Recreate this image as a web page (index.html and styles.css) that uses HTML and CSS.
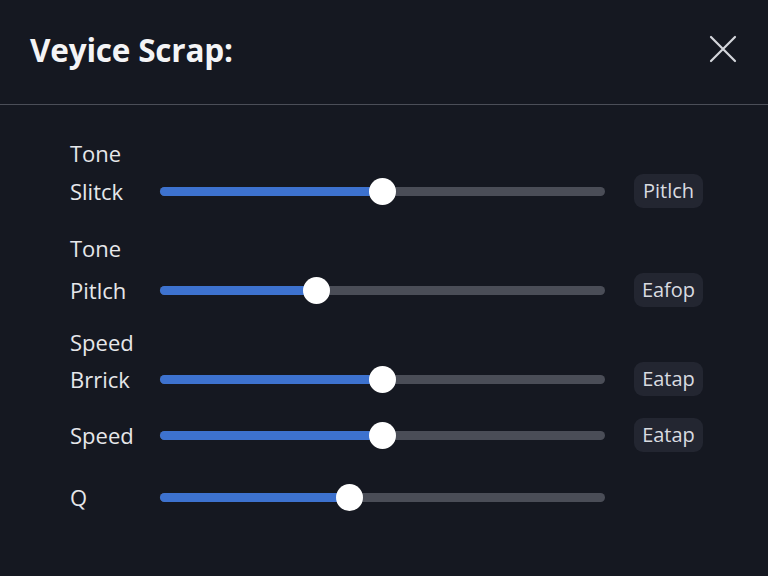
FILE: index.html
```html
<!DOCTYPE html>
<html>
<head>
<meta charset="utf-8">
<link rel="stylesheet" href="styles.css">
</head>
<body>
<div class="panel">
  <header class="header">
    <h1 class="title">Veyice Scrap:</h1>
    <button class="close" aria-label="Close">
      <svg width="30" height="30" viewBox="0 0 30 30"><path d="M3 3 L27 27 M27 3 L3 27" stroke="#d4d6dc" stroke-width="2.2" stroke-linecap="round" fill="none"/></svg>
    </button>
  </header>
  <div class="content">
    <div class="caption c1">Tone</div>
    <div class="row r1">
      <span class="label">Slitck</span>
      <div class="track"><div class="fill" style="width:222px"></div><div class="thumb" style="left:222px"></div></div>
      <span class="badge">Pitlch</span>
    </div>
    <div class="caption c2">Tone</div>
    <div class="row r2">
      <span class="label">Pitlch</span>
      <div class="track"><div class="fill" style="width:156px"></div><div class="thumb" style="left:156px"></div></div>
      <span class="badge">Eafop</span>
    </div>
    <div class="caption c3">Speed</div>
    <div class="row r3">
      <span class="label">Brrick</span>
      <div class="track"><div class="fill" style="width:222px"></div><div class="thumb" style="left:222px"></div></div>
      <span class="badge">Eatap</span>
    </div>
    <div class="row r4">
      <span class="label">Speed</span>
      <div class="track"><div class="fill" style="width:222px"></div><div class="thumb" style="left:222px"></div></div>
      <span class="badge">Eatap</span>
    </div>
    <div class="row r5">
      <span class="label">Q</span>
      <div class="track"><div class="fill" style="width:189px"></div><div class="thumb" style="left:189px"></div></div>
      <span class="badge empty"></span>
    </div>
  </div>
</div>
</body>
</html>
```
FILE: styles.css
```css
* { box-sizing: border-box; }
html, body { margin: 0; padding: 0; }
body {
  width: 768px;
  height: 576px;
  overflow: hidden;
  background: #151821;
  font-family: "Open Sans", "Noto Sans", sans-serif;
  color: #e8e9ec;
}
.panel { width: 768px; height: 576px; }
.header {
  height: 105px;
  border-bottom: 1px solid #4b4e58;
  display: flex;
  align-items: center;
  justify-content: space-between;
  padding: 0 30px 6px 30px;
}
.title {
  margin: 0;
  font-size: 31.5px;
  font-weight: 700;
  color: #f4f4f6;
  letter-spacing: -0.2px;
}
.close {
  background: none;
  border: none;
  padding: 0;
  width: 30px;
  height: 30px;
  display: block;
}
.close svg { display: block; }
.content { padding: 0 0 0 70px; }
.caption {
  height: 28px;
  line-height: 28px;
  font-size: 22px;
  color: #e6e7ea;
}
.c1 { margin-top: 34px; }
.c2 { margin-top: 26px; }
.c3 { margin-top: 21px; }
.row {
  height: 34px;
  display: flex;
  align-items: center;
}
.r1 { margin-top: 7px; }
.r2 { margin-top: 11px; }
.r3 { margin-top: 6px; }
.r4 { margin-top: 22px; }
.r5 { margin-top: 28px; }
.label {
  width: 90px;
  font-size: 22px;
  color: #e6e7ea;
}
.track {
  position: relative;
  width: 445px;
  height: 9px;
  border-radius: 5px;
  background: #4a4d57;
}
.fill {
  height: 9px;
  border-radius: 5px;
  background: #3d72cf;
}
.thumb {
  position: absolute;
  top: 50%;
  width: 27px;
  height: 27px;
  margin: -13.5px 0 0 -13.5px;
  border-radius: 50%;
  background: #ffffff;
}
.badge {
  margin-left: 29px;
  width: 69px;
  height: 34px;
  line-height: 34px;
  text-align: center;
  border-radius: 9px;
  background: #232631;
  color: #d9dbe0;
  font-size: 20px;
}
.badge.empty { background: transparent; }
```
